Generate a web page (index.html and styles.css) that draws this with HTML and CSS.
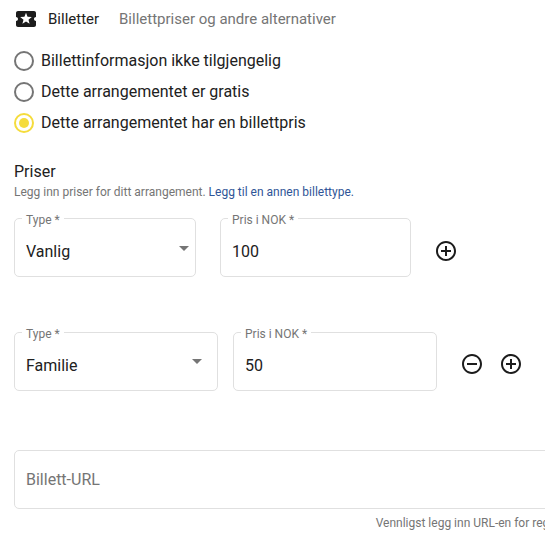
FILE: index.html
```html
<!DOCTYPE html>
<html lang="nb">
<head>
  <meta charset="UTF-8" />
  <meta name="viewport" content="width=device-width, initial-scale=1" />
  <title>Billetter</title>
  <link rel="stylesheet" href="styles.css">
</head>
<body>
  <div class="page">
    <div class="section-head">
      <svg class="ticket-icon" width="24" height="24" viewBox="0 0 24 24"><path d="M20 12c0-1.1.9-2 2-2V6c0-1.1-.9-2-2-2H4c-1.1 0-1.99.9-1.99 2v4c1.1 0 1.99.9 1.99 2s-.89 2-2 2v4c0 1.1.9 2 2 2h16c1.1 0 2-.9 2-2v-4c-1.1 0-2-.9-2-2zm-4.42 4.8L12 14.5l-3.58 2.3 1.08-4.12-3.29-2.69 4.24-.25L12 5.8l1.54 3.95 4.24.25-3.29 2.69 1.09 4.11z"/></svg>
      <span class="section-title">Billetter</span>
      <span class="section-sub">Billettpriser og andre alternativer</span>
    </div>

    <div class="radio-group">
      <label class="radio"><span class="radio-ring"></span>Billettinformasjon ikke tilgjengelig</label>
      <label class="radio"><span class="radio-ring"></span>Dette arrangementet er gratis</label>
      <label class="radio"><span class="radio-ring checked"></span>Dette arrangementet har en billettpris</label>
    </div>

    <h3 class="prices-title">Priser</h3>
    <p class="prices-help">Legg inn priser for ditt arrangement. <a href="#">Legg til en annen billettype.</a></p>

    <div class="price-row first">
      <div class="field type-field"><span class="field-label">Type *</span><span class="value">Vanlig</span><span class="caret"></span></div>
      <div class="field price-field"><span class="field-label">Pris i NOK *</span><span class="value">100</span></div>
      <div class="row-actions">
        <svg width="24" height="24" viewBox="0 0 24 24"><path d="M13 7h-2v4H7v2h4v4h2v-4h4v-2h-4V7zm-1-5C6.48 2 2 6.48 2 12s4.48 10 10 10 10-4.48 10-10S17.52 2 12 2zm0 18c-4.41 0-8-3.59-8-8s3.59-8 8-8 8 3.59 8 8-3.59 8-8 8z"/></svg>
      </div>
    </div>

    <div class="price-row second">
      <div class="field type-field"><span class="field-label">Type *</span><span class="value">Familie</span><span class="caret"></span></div>
      <div class="field price-field"><span class="field-label">Pris i NOK *</span><span class="value">50</span></div>
      <div class="row-actions">
        <svg width="24" height="24" viewBox="0 0 24 24"><path d="M7 11v2h10v-2H7zm5-9C6.48 2 2 6.48 2 12s4.48 10 10 10 10-4.48 10-10S17.52 2 12 2zm0 18c-4.41 0-8-3.59-8-8s3.59-8 8-8 8 3.59 8 8-3.59 8-8 8z"/></svg>
        <svg width="24" height="24" viewBox="0 0 24 24"><path d="M13 7h-2v4H7v2h4v4h2v-4h4v-2h-4V7zm-1-5C6.48 2 2 6.48 2 12s4.48 10 10 10 10-4.48 10-10S17.52 2 12 2zm0 18c-4.41 0-8-3.59-8-8s3.59-8 8-8 8 3.59 8 8-3.59 8-8 8z"/></svg>
      </div>
    </div>

    <div class="url-block">
      <div class="url-field">Billett-URL</div>
      <p class="url-help">Vennligst legg inn URL-en for registrering</p>
    </div>
  </div>
</body>
</html>
```

FILE: styles.css
```css
* {
  box-sizing: border-box;
}

html,
body {
  margin: 0;
  height: 540px;
  overflow: hidden;
  background: white;
}

body {
  font-family: Roboto, sans-serif;
  color: #212121;
}

.page {
  padding: 7px 0 0 14px;
  width: 600px;
}

.section-head {
  display: flex;
  align-items: center;
  height: 24px;
  font-size: 15px;
}

.ticket-icon {
  margin-right: 10px;
  flex: none;
  fill: #1c1c1c;
}

.section-title {
  width: 71px;
}

.section-sub {
  color: #757575;
}

.radio-group {
  margin-top: 14px;
}

.radio {
  display: flex;
  align-items: center;
  height: 31px;
  font-size: 16px;
}

.radio-ring {
  width: 20px;
  height: 20px;
  border: 2px solid #757575;
  border-radius: 50%;
  margin-right: 7px;
  position: relative;
}

.radio-ring.checked {
  border-color: #f5dc3c;
}

.radio-ring.checked::after {
  content: '';
  position: absolute;
  top: 3px;
  left: 3px;
  width: 10px;
  height: 10px;
  border-radius: 50%;
  background: #f5dc3c;
}

.prices-title {
  margin: 24px 0 0;
  font-size: 16px;
  font-weight: 400;
  line-height: 20px;
}

.prices-help {
  margin: 2px 0 0;
  font-size: 12px;
  line-height: 16px;
  color: #757575;
}

.prices-help a {
  color: #2f5597;
  text-decoration: none;
}

.price-row {
  display: flex;
  align-items: flex-start;
}

.price-row.first {
  margin-top: 18px;
}

.price-row.second {
  margin-top: 55px;
}

.field {
  position: relative;
  height: 59px;
  padding: 23px 11px 0;
  border: 1px solid #e0e0e0;
  border-radius: 5px;
}

.field-label {
  position: absolute;
  top: -7px;
  left: 7px;
  padding: 0 4px;
  font-size: 12px;
  line-height: 16px;
  color: #757575;
  background: white;
}

.value {
  display: block;
  font-size: 16px;
  line-height: 20px;
}

.first .type-field {
  width: 182px;
  margin-right: 24px;
}

.first .price-field {
  width: 191px;
}

.second .type-field {
  width: 204px;
  margin-right: 15px;
}

.second .price-field {
  width: 204px;
}

.caret {
  position: absolute;
  width: 0;
  height: 0;
  border-left: 5px solid transparent;
  border-right: 5px solid transparent;
  border-top: 5px solid #757575;
}

.first .caret {
  right: 6px;
  top: 27px;
}

.second .caret {
  right: 15px;
  top: 26px;
}

.row-actions {
  display: flex;
  gap: 15px;
  margin-left: 23px;
  fill: #1c1c1c;
}

.first .row-actions {
  margin-top: 21px;
}

.second .row-actions {
  margin-top: 20px;
}

.url-block {
  margin-top: 59px;
  width: 579px;
}

.url-field {
  height: 59px;
  border: 1px solid #e0e0e0;
  border-radius: 5px;
  padding: 0 11px;
  display: flex;
  align-items: center;
  font-size: 16px;
  color: #757575;
}

.url-help {
  margin: 6px 0 0;
  font-size: 12px;
  line-height: 16px;
  color: #757575;
  text-align: right;
}
```
